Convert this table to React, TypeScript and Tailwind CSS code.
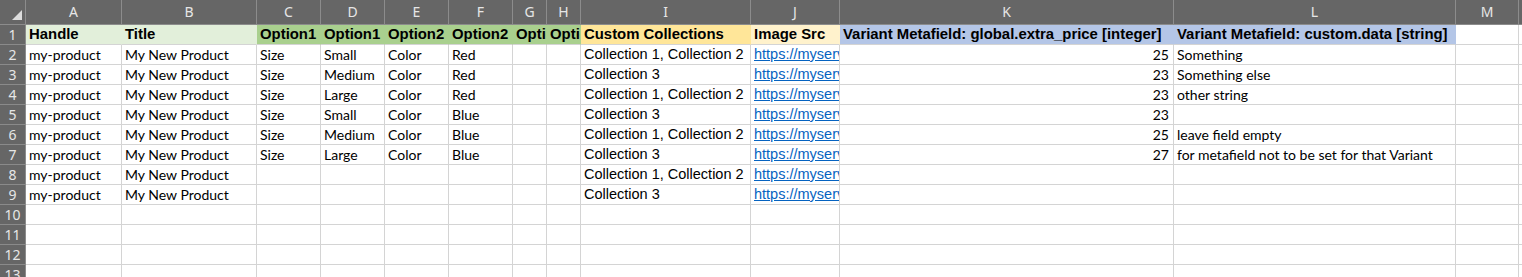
import React from 'react';

type Col = { key: string; w: number };

const COLS: Col[] = [
  { key: 'A', w: 96 },
  { key: 'B', w: 135 },
  { key: 'C', w: 64 },
  { key: 'D', w: 64 },
  { key: 'E', w: 64 },
  { key: 'F', w: 64 },
  { key: 'G', w: 34 },
  { key: 'H', w: 34 },
  { key: 'I', w: 170 },
  { key: 'J', w: 89 },
  { key: 'K', w: 334 },
  { key: 'L', w: 282 },
  { key: 'M', w: 63 },
];

const HEADERS = [
  { text: 'Handle', fill: '#e2efda' },
  { text: 'Title', fill: '#e2efda' },
  { text: 'Option1 Name', fill: '#a9d08e' },
  { text: 'Option1 Value', fill: '#a9d08e' },
  { text: 'Option2 Name', fill: '#a9d08e' },
  { text: 'Option2 Value', fill: '#a9d08e' },
  { text: 'Option3 Name', fill: '#a9d08e' },
  { text: 'Option3 Value', fill: '#a9d08e' },
  { text: 'Custom Collections', fill: '#ffe699' },
  { text: 'Image Src', fill: '#fff2cc' },
  { text: 'Variant Metafield: global.extra_price [integer]', fill: '#b4c6e7' },
  { text: 'Variant Metafield: custom.data [string]', fill: '#b4c6e7' },
];

const fillClass: Record<string, string> = {
  '#e2efda': 'bg-[#e2efda] border-r-[#e2efda]',
  '#a9d08e': 'bg-[#a9d08e] border-r-[#a9d08e]',
  '#ffe699': 'bg-[#ffe699] border-r-[#ffe699]',
  '#fff2cc': 'bg-[#fff2cc] border-r-[#fff2cc]',
  '#b4c6e7': 'bg-[#b4c6e7] border-r-[#b4c6e7]',
};

const C12 = 'Collection 1, Collection 2';
const C3 = 'Collection 3';

// option1 name, option1 value, option2 name, option2 value, collections, extra price, custom data
const ROWS: [string, string, string, string, string, string, string][] = [
  ['Size', 'Small', 'Color', 'Red', C12, '25', 'Something'],
  ['Size', 'Medium', 'Color', 'Red', C3, '23', 'Something else'],
  ['Size', 'Large', 'Color', 'Red', C12, '23', 'other string'],
  ['Size', 'Small', 'Color', 'Blue', C3, '23', ''],
  ['Size', 'Medium', 'Color', 'Blue', C12, '25', 'leave field empty'],
  ['Size', 'Large', 'Color', 'Blue', C3, '27', 'for metafield not to be set for that Variant'],
  ['', '', '', '', C12, '', ''],
  ['', '', '', '', C3, '', ''],
];

const calibri = "font-['Lato','Liberation_Sans',sans-serif] text-[14px] text-black";
const arial = "font-['Liberation_Sans','Arial',sans-serif] text-[14.5px]";
const arialBold = "font-['Liberation_Sans','Arial',sans-serif] text-[14.9px] font-bold text-black";

const Cell: React.FC<{ w: number; className?: string; children?: React.ReactNode }> = ({ w, className = '', children }) => (
  <div
    style={{ width: w }}
    className={`shrink-0 h-[20px] border-r border-b border-[#d4d4d4] overflow-hidden whitespace-nowrap px-[3px] leading-[19px] ${className}`}
  >
    {children}
  </div>
);

const RowHead: React.FC<{ n: number }> = ({ n }) => (
  <div className="shrink-0 w-[26px] h-[20px] bg-[#666666] border-r border-b border-r-[#8c8c8c] border-b-[#8a8a8a] text-[#e6e6e6] text-center leading-[19px] text-[14px] font-['Noto_Sans',sans-serif]">
    {n}
  </div>
);

export default function App() {
  const dataRows = Array.from({ length: 12 }, (_, i) => i + 2);

  return (
    <div className="w-[1522px] h-[277px] overflow-hidden bg-white">
      {/* column letters */}
      <div className="flex h-[25px] bg-[#666666] border-b border-[#8c8c8c]">
        <div className="shrink-0 w-[26px] h-full border-r border-[#8c8c8c] relative">
          <svg className="absolute left-[12px] top-[10px]" width="10" height="10" viewBox="0 0 10 10">
            <polygon points="10,0 10,10 0,10" fill="#dcdcdc" />
          </svg>
        </div>
        {COLS.map((c) => (
          <div
            key={c.key}
            style={{ width: c.w }}
            className="shrink-0 h-full border-r border-[#8c8c8c] text-center text-[#e6e6e6] text-[14px] leading-[24px] font-['Noto_Sans',sans-serif]"
          >
            {c.key}
          </div>
        ))}
        <div className="flex-1" />
      </div>

      {/* row 1: column titles */}
      <div className="flex">
        <RowHead n={1} />
        {HEADERS.map((h, i) => (
          <Cell key={i} w={COLS[i].w} className={`${fillClass[h.fill]} ${arialBold}`}>
            {h.text}
          </Cell>
        ))}
        <Cell w={COLS[12].w} />
        <div className="flex-1 h-[20px] border-b border-[#d4d4d4]" />
      </div>

      {dataRows.map((n) => {
        const r = ROWS[n - 2];
        return (
          <div key={n} className="flex">
            <RowHead n={n} />
            <Cell w={COLS[0].w} className={calibri}>{r ? 'my-product' : ''}</Cell>
            <Cell w={COLS[1].w} className={calibri}>{r ? 'My New Product' : ''}</Cell>
            <Cell w={COLS[2].w} className={calibri}>{r?.[0]}</Cell>
            <Cell w={COLS[3].w} className={calibri}>{r?.[1]}</Cell>
            <Cell w={COLS[4].w} className={calibri}>{r?.[2]}</Cell>
            <Cell w={COLS[5].w} className={calibri}>{r?.[3]}</Cell>
            <Cell w={COLS[6].w} />
            <Cell w={COLS[7].w} />
            <Cell w={COLS[8].w} className={`${arial} text-black`}>{r?.[4]}</Cell>
            <Cell w={COLS[9].w} className={`${arial} text-[#0563c1] underline`}>
              {r ? 'https://myserver.com/images/product.jpg' : ''}
            </Cell>
            <Cell w={COLS[10].w} className={`${calibri} text-right pr-[4px]`}>{r?.[5]}</Cell>
            <Cell w={COLS[11].w} className={calibri}>{r?.[6]}</Cell>
            <Cell w={COLS[12].w} />
            <div className="flex-1 h-[20px] border-b border-[#d4d4d4]" />
          </div>
        );
      })}
    </div>
  );
}
